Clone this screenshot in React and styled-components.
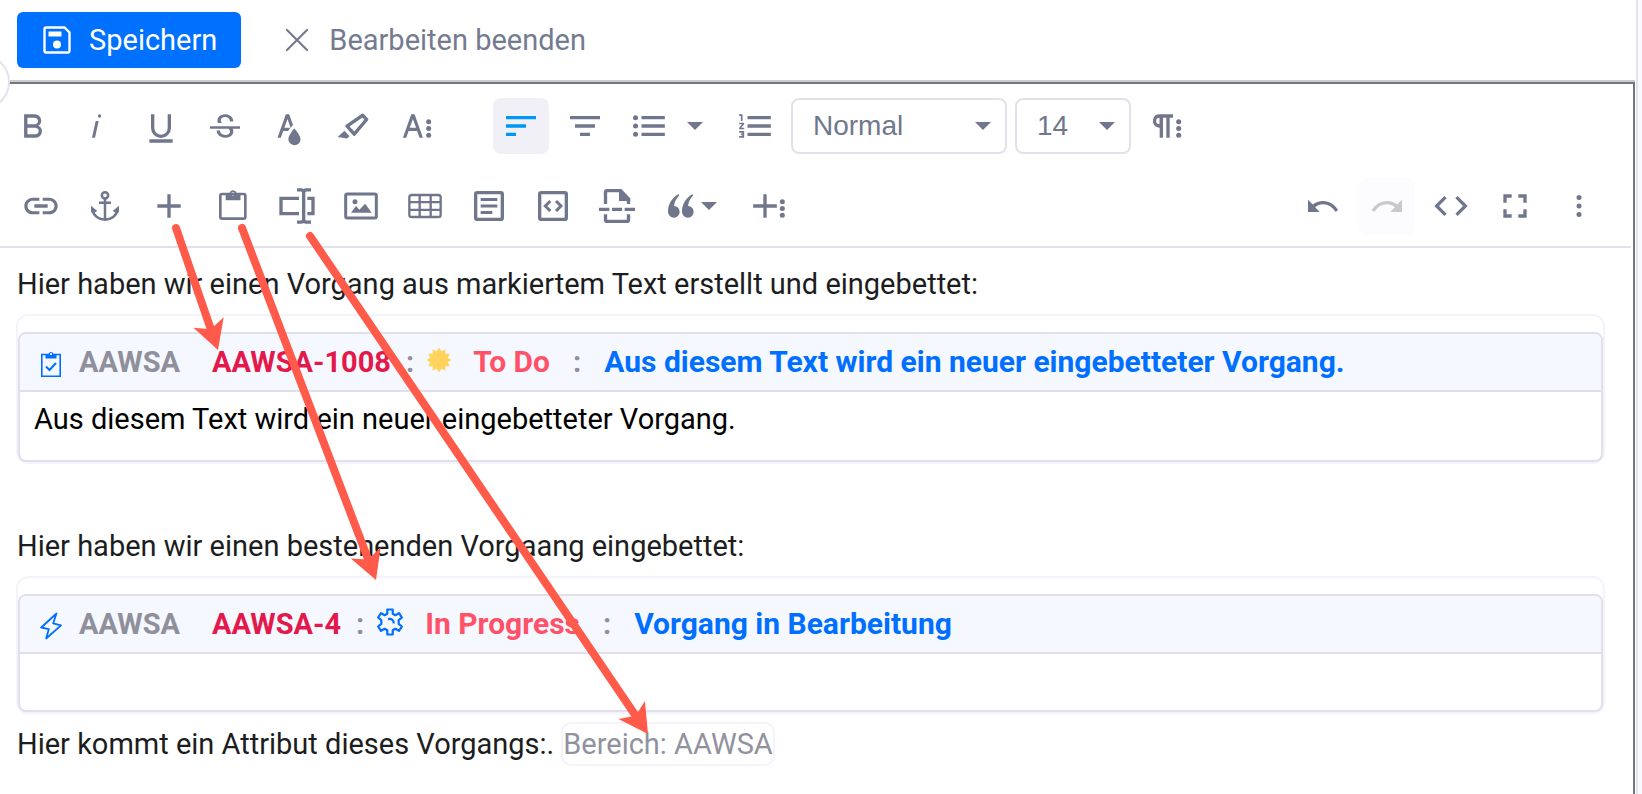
import React, { useState } from "react";
import styled, { createGlobalStyle, css } from "styled-components";

const GlobalStyle = createGlobalStyle`
    * {
        box-sizing: border-box;
    }
    body {
        margin: 0;
        background: #fff;
        font-family: Roboto, "Liberation Sans", sans-serif;
        font-size: 29px;
        color: #1c1d21;
    }
    button, select {
        font: inherit;
        border: 0;
        padding: 0;
        background: none;
        cursor: pointer;
    }
    a {
        text-decoration: none;
    }
    svg {
        display: block;
        flex-shrink: 0;
    }
`

const Page = styled.div`
    position: relative;
    display: flex;
    min-height: 100vh;
    overflow: hidden;
`

const Main = styled.main`
    display: flex;
    flex-direction: column;
    flex: 1;
    min-width: 0;
`

const Gutter = styled.aside`
    width: 6px;
    border-left: 2px solid #e3e3ed;
    background: #fafafc;
`

const Header = styled.header`
    display: flex;
    align-items: center;
    height: 82px;
    padding: 0 17px 2px;
    gap: 44px;
`

const SaveButton = styled.button`
    display: flex;
    align-items: center;
    gap: 18px;
    height: 56px;
    padding: 0 24px 0 26px;
    border-radius: 6px;
    background: #0070ff;
    color: #fff;
`

const CancelButton = styled.button`
    display: flex;
    align-items: center;
    gap: 20px;
    height: 56px;
    color: #757b8f;
`

const CollapseHandle = styled.button`
    position: absolute;
    left: -46px;
    top: 54px;
    width: 56px;
    height: 56px;
    border: 2px solid #e3e2ee;
    border-radius: 50%;
    background: #fff;
`

const Editor = styled.section`
    display: flex;
    flex-direction: column;
    flex: 1;
    margin-right: 1px;
    border-top: 2px solid #727681;
    border-right: 2px solid #727681;
    box-shadow: 0 -2px 0 #cacdce;
`

const Toolbar = styled.div`
    display: flex;
    flex-direction: column;
    gap: 24px;
    margin-right: 2px;
    padding: 14px 24px 12px 5px;
    border-bottom: 2px solid #e1e0ec;
`

const ToolRow = styled.div`
    display: flex;
    justify-content: space-between;
    padding-left: ${({ $indent }) => ($indent ? "8px" : "0")};
`

const ToolSide = styled.div`
    display: flex;
    gap: 48px;
`

const ToolGroup = styled.div`
    display: flex;
    gap: 8px;
`

const ToolButton = styled.button`
    display: flex;
    align-items: center;
    justify-content: center;
    width: 56px;
    height: 56px;
    border-radius: 8px;
    color: #70778c;
    ${({ $active }) => $active && css`
        background: #f2f0f7;
        color: #0098f7;
    `}
    &:disabled {
        background: #fcfcfe;
        color: #c9c9cb;
        cursor: default;
    }
`

const SplitButton = styled.div`
    display: flex;
    padding-right: 6px;
`

const CaretButton = styled(ToolButton)`
    width: 36px;
`

const QuoteButton = styled(ToolButton)`
    justify-content: flex-start;
    width: 80px;
    padding-left: 8px;
`

const SelectBox = styled.div`
    display: flex;
    align-items: center;
    position: relative;
    width: ${({ $small }) => ($small ? "116px" : "216px")};
    height: 56px;
    color: #70778c;
`

const SelectField = styled.select`
    width: 100%;
    height: 100%;
    padding: 0 40px 2px 20px;
    border: 2px solid #e1e0ec;
    border-radius: 8px;
    appearance: none;
    color: inherit;
    font-family: "Liberation Sans", Arial, sans-serif;
    font-size: 28px;
`

const SelectCaret = styled.span`
    position: absolute;
    right: 16px;
    pointer-events: none;
`

const Content = styled.div`
    display: flex;
    flex-direction: column;
    gap: 8px;
    padding: 14px 28px 24px 16px;
`

const Paragraph = styled.p`
    display: flex;
    align-items: center;
    gap: 7px;
    min-height: 44px;
    margin: 0;
    line-height: 44px;
    padding-left: 1px;
`

const Embed = styled.div`
    padding-top: 16px;
    border: 2px solid #f4f3fc;
    border-radius: 12px;
`

const Card = styled.article`
    border: 2px solid #e0e0ea;
    border-radius: 8px;
    overflow: hidden;
`

const CardHead = styled.div`
    display: flex;
    align-items: center;
    height: 58px;
    padding: 0 20px;
    border-bottom: 2px solid #e0e0ea;
    background: #f5f8ff;
    font-weight: 700;
    line-height: 44px;
    color: #8f909c;
`

const TypeIcon = styled.span`
    margin-right: 17px;
    padding-top: 4px;
`

const Project = styled.span`
    margin-right: 32px;
`

const IssueKey = styled.a`
    margin-right: 15px;
    color: #e3194b;
`

const StatusIcon = styled.span`
    margin: 0 21px 0 12px;
    padding-bottom: 4px;
`

const Status = styled.span`
    margin-right: 23px;
    font-size: 30px;
    color: #ff5167;
`

const Summary = styled.a`
    margin-left: 23px;
    font-size: 30px;
    color: #006fff;
`

const CardBody = styled.div`
    min-height: 56px;
    color: #000;
`

const CardText = styled.p`
    margin: 0;
    padding: 5px 14px 19px;
    line-height: 44px;
`

const AttributeChip = styled.span`
    height: 44px;
    line-height: 40px;
    border: 2px solid #f4f3fc;
    border-radius: 10px;
    color: #92929e;
`

const Overlay = styled.svg`
    position: absolute;
    inset: 0;
    width: 100%;
    height: 100%;
    pointer-events: none;
`

const Svg = ({ children, size = 40 }) => (
    <svg width={size} height={size} viewBox="0 0 24 24" fill="currentColor" aria-hidden="true">
        {children}
    </svg>
)

// outlined shapes share the same stroke settings
const Line = ({ d, w = 2 }) => <path d={d} fill="none" stroke="currentColor" strokeWidth={w} />

const Dots = ({ x }) => (
    <>
        <circle cx={x} cy="9.5" r="1.5" />
        <circle cx={x} cy="13.5" r="1.5" />
        <circle cx={x} cy="17.5" r="1.5" />
    </>
)

const Caret = () => (
    <svg width="16" height="8" viewBox="0 0 16 8" fill="currentColor" aria-hidden="true">
        <path d="M0 0h16L8 8z" />
    </svg>
)

const icons = {
    bold: <path d="M15.25,11.8h0A3.68,3.68,0,0,0,17,9a3.93,3.93,0,0,0-3.86-4H6.65V19h7a3.74,3.74,0,0,0,3.7-3.78V15.1A3.64,3.64,0,0,0,15.25,11.8ZM8.65,7h4.2a2.09,2.09,0,0,1,2,1.3,2.09,2.09,0,0,1-1.37,2.61,2.23,2.23,0,0,1-.63.09H8.65Zm4.6,10H8.65V13h4.6a2.09,2.09,0,0,1,2,1.3,2.09,2.09,0,0,1-1.37,2.61A2.23,2.23,0,0,1,13.25,17Z" />,
    italic: <path d="M11.2,9h1.8l-2.2,10H9ZM13.5,5a1,1,0,1,0,1,1,1,1,0,0,0-1-1Z" />,
    underline: <path d="M19,20v2H5V20ZM16,13.2a4,4,0,0,1-8,0V5H6v8.2a6,6,0,0,0,12,0V5H16Z" />,
    strike: <path d="M3,12.2H21v1.5H16.63a3.6,3.6,0,0,1,.35,1.6,3.25,3.25,0,0,1-1.31,2.7A5.55,5.55,0,0,1,12.2,19a6.44,6.44,0,0,1-2.62-.54,4.46,4.46,0,0,1-1.9-1.49,3.67,3.67,0,0,1-.67-2.15V14.7H9.02v.12a2.18,2.18,0,0,0,.85,1.83,3.69,3.69,0,0,0,2.33.68,3.39,3.39,0,0,0,2.08-.55,1.73,1.73,0,0,0,.7-1.46,1.7,1.7,0,0,0-.65-1.44,3,3,0,0,0-.27-.18H3ZM16.34,7.06A4.18,4.18,0,0,0,14.62,5.55,5.63,5.63,0,0,0,12.11,5,5.16,5.16,0,0,0,8.75,6.06,3.36,3.36,0,0,0,7.44,8.77a3.23,3.23,0,0,0,.32,1.43h2.6c-.09-.06-.19-.11-.26-.16a1.6,1.6,0,0,1-.65-1.3,1.8,1.8,0,0,1,.69-1.51,3.13,3.13,0,0,1,1.97-.56,3.05,3.05,0,0,1,2.1.67,2.35,2.35,0,0,1,.74,1.83v.12h2V9.17A3.9,3.9,0,0,0,16.34,7.06Z" />,
    textColor: <path d="M15.2,13.5s-3.6,3.9-3.6,6.3a3.65,3.65,0,0,0,7.3.1v-.1C18.9,17.4,15.2,13.5,15.2,13.5Zm-1.47-1.36.67-.73L12.1,5h-2l-5,14h2l1.43-4h2.94A24.4,24.4,0,0,1,13.73,12.14ZM11.1,7.8l1.86,5.2H9.24Z" />,
    marker: <path d="M9.92,12.24l7.75-5.39,1.18,1.3-6.1,7.2L9.92,12.24M7.59,12.65l4.53,4.98a.93.93,0,0,0,1.4-.09L20.97,8.73A.91.91,0,0,0,20.99,7.53l-2.51-2.76a.91.91,0,0,0-1.2-.09L7.81,11.27A.93.93,0,0,0,7.59,12.65ZM2.79,18.53,8.41,19.5l1.48-1.35-3.03-3.33Z" />,
    moreText: (
        <>
            <path d="M13.55,19h2l-5-14h-2l-5,14h2l1.4-4h5.1Zm-5.9-6,1.9-5.2,1.9,5.2Z" />
            <Dots x="19" />
        </>
    ),
    alignLeft: <path d="M3 6h18v2H3zM3 11h12v2H3zM3 16h6v2H3z" />,
    alignCenter: <path d="M3 6h18v2H3zM6 11h12v2H6zM9 16h6v2H9z" />,
    bullets: (
        <>
            <circle cx="3.9" cy="7" r="1.5" />
            <circle cx="3.9" cy="12" r="1.5" />
            <circle cx="3.9" cy="17" r="1.5" />
            <path d="M7.5 6h14v2h-14zM7.5 11h14v2h-14zM7.5 16h14v2h-14z" />
        </>
    ),
    numbers: <path d="M7.5 6h14v2h-14zM7.5 11h14v2h-14zM7.5 16h14v2h-14zM3.5 9h1V5h-2v1h1zM2.5 11h1.8l-1.8 2.1v.9h3v-1H3.7l1.8-2.1V10h-3zM2.5 16h2v.5h-1v1h1v.5h-2v1h3v-4h-3z" />,
    paragraph: (
        <>
            <path d="M7.7,5a4.1,4.1,0,0,0-4.1,3.2,4,4,0,0,0,3.1,4.7,4,4,0,0,0,.9.1v6h2V7h2V19h2V7h2V5ZM5.5,9a2,2,0,0,1,2-2v4A2,2,0,0,1,5.5,9Z" />
            <Dots x="19" />
        </>
    ),
    link: <path d="M3.9 12c0-1.71 1.39-3.1 3.1-3.1h4V7H7c-2.76 0-5 2.24-5 5s2.24 5 5 5h4v-1.9H7c-1.71 0-3.1-1.39-3.1-3.1zM8 13h8v-2H8v2zm9-6h-4v1.9h4c1.71 0 3.1 1.39 3.1 3.1s-1.39 3.1-3.1 3.1h-4V17h4c2.76 0 5-2.24 5-5s-2.24-5-5-5z" />,
    anchor: (
        <>
            <circle cx="12" cy="5.6" r="1.9" fill="none" stroke="currentColor" strokeWidth="1.5" />
            <Line w="1.5" d="M12 7.5V20M8.4 10.1h7.2M4.6 14.5c.5 3.4 3.6 5.7 7.4 5.7s6.9-2.3 7.4-5.7" />
            <path d="M3.6 11.8v4l1.6.4 2.2-1.2zM20.4 11.8v4l-1.6.4-2.2-1.2z" />
        </>
    ),
    plus: <Line d="M12 5v14M5 12h14" />,
    clipboard: (
        <>
            <rect x="4.4" y="4.8" width="15" height="14.8" rx="1" fill="none" stroke="currentColor" strokeWidth="1.6" />
            <path fillRule="evenodd" d="M7.6 4.2h2.2a2.3 2.3 0 0 1 4.4 0h2.3v4.4H7.6zM12 3.6a1.1 1.1 0 1 0 0 2.2 1.1 1.1 0 0 0 0-2.2z" />
        </>
    ),
    field: (
        <>
            <Line w="2" d="M13.2 7.4H2.4v9.2h10.8M18.2 7.4h3.4v9.2h-3.4" />
            <Line w="2" d="M12 2.3h2.2q1.8 0 1.8 1.6v16.2q0 1.6-1.8 1.6H12M20.4 2.3h-2.6q-1.8 0-1.8 1.6M20.4 21.7h-2.6q-1.8 0-1.8-1.6" />
        </>
    ),
    image: (
        <>
            <rect x="2.8" y="4.8" width="18.4" height="14.4" rx="1" fill="none" stroke="currentColor" strokeWidth="1.8" />
            <circle cx="8.4" cy="9.4" r="1.5" />
            <path d="M6 16l3-4 2 2.2 3.5-3.6L18.4 16z" />
        </>
    ),
    table: (
        <>
            <rect x="2.6" y="5.4" width="18.8" height="13.2" rx="1.4" fill="none" stroke="currentColor" strokeWidth="1.4" />
            <Line w="1.4" d="M8.8 5.4v13.2M15.4 5.4v13.2M2.6 9.7h18.8M2.6 14.3h18.8" />
        </>
    ),
    article: (
        <>
            <rect x="4" y="4" width="16" height="16" rx="1" fill="none" stroke="currentColor" strokeWidth="2" />
            <Line w="1.8" d="M7 8.1h10M7 12h10M7 15.9h7" />
        </>
    ),
    codeBox: (
        <>
            <rect x="4" y="4" width="16" height="16" rx="1" fill="none" stroke="currentColor" strokeWidth="2" />
            <Line w="1.8" d="M10.4 9L7.4 12l3 3M13.8 9l3 3-3 3" />
        </>
    ),
    pageBreak: (
        <>
            <Line d="M5.1 10.8V3.8q0-1 1-1h8M18.9 10.8V8M5.1 17v3.2q0 1 1 1h11.8q1 0 1-1V17M1.2 14h6.2M9 14h6M16.6 14h6.2" />
            <path d="M13.2 1.8h1.4l5.3 5.6V9h-6.7z" />
        </>
    ),
    quote: (
        <>
            <path d="M10.4 5l.6.6C9 7.8 8 9.8 7.9 12a3.5 3.5 0 1 1-3.7 3.8C4 11.5 6.2 7.3 10.4 5z" />
            <path d="M18.8 5l.6.6c-2 2.2-3 4.2-3.1 6.4a3.5 3.5 0 1 1-3.7 3.8c-.2-4.3 2-8.5 6.2-10.8z" />
        </>
    ),
    morePlus: (
        <>
            <Line d="M9.6 5v14M2.5 12h14.2" />
            <Dots x="20" />
        </>
    ),
    undo: <path d="M12 9c-2.3 0-4.5.8-6.1 2.1L3 8.2v7.4h7l-2.7-2.8c1.3-1 2.9-1.8 4.7-1.8 3 0 5.9 1.8 7.4 4.5l1.7-.9C19.4 11.2 15.8 9 12 9z" />,
    redo: <path d="M12 9c2.3 0 4.5.8 6.1 2.1L21 8.2v7.4h-7l2.7-2.8c-1.3-1-2.9-1.8-4.7-1.8-3 0-5.9 1.8-7.4 4.5l-1.7-.9C4.6 11.2 8.2 9 12 9z" />,
    code: <path d="M9.4 16.6L4.8 12l4.6-4.6L8 6l-6 6 6 6 1.4-1.4zm5.2 0l4.6-4.6-4.6-4.6L16 6l6 6-6 6-1.4-1.4z" />,
    fullscreen: <path d="M7 14H5v5h5v-2H7v-3zm-2-4h2V7h3V5H5v5zm12 7h-3v2h5v-5h-2v3zM14 5v2h3v3h2V5h-5z" />,
    more: (
        <>
            <circle cx="12" cy="6.9" r="1.5" />
            <circle cx="12" cy="12" r="1.5" />
            <circle cx="12" cy="17.1" r="1.5" />
        </>
    ),
}

const Tool = ({ icon, label, ...rest }) => (
    <ToolButton type="button" aria-label={label} {...rest}>
        <Svg>{icons[icon]}</Svg>
    </ToolButton>
)

const textTools = [
    ["bold", "Fett"],
    ["italic", "Kursiv"],
    ["underline", "Unterstrichen"],
    ["strike", "Durchgestrichen"],
    ["textColor", "Textfarbe"],
    ["marker", "Hintergrundfarbe"],
    ["moreText", "Mehr Text"],
]

const insertTools = [
    ["link", "Link"],
    ["anchor", "Anker"],
    ["plus", "Vorgang erstellen"],
    ["clipboard", "Vorgang einbetten"],
    ["field", "Attribut einbetten"],
    ["image", "Bild"],
    ["table", "Tabelle"],
    ["article", "Textblock"],
    ["codeBox", "Codeblock"],
    ["pageBreak", "Seitenumbruch"],
]

const SaveIcon = () => (
    <svg width="28" height="28" viewBox="0 0 28 28" fill="none" stroke="#fff" strokeWidth="2.4" aria-hidden="true">
        <path d="M3 1.5h18.5l5 5V25a1.5 1.5 0 0 1-1.5 1.5H3A1.5 1.5 0 0 1 1.5 25V3A1.5 1.5 0 0 1 3 1.5z" />
        <path d="M5.5 5.5h13v5h-13z" fill="#fff" stroke="none" />
        <circle cx="14" cy="18.5" r="4" fill="#fff" stroke="none" />
    </svg>
)

const CloseIcon = () => (
    <svg width="24" height="24" viewBox="0 0 24 24" stroke="currentColor" strokeWidth="2.2" strokeLinecap="round" aria-hidden="true">
        <path d="M2 2l20 20M22 2L2 22" />
    </svg>
)

const TaskIcon = () => (
    <svg width="22" height="28" viewBox="0 0 22 28" fill="none" stroke="#006fff" aria-hidden="true">
        <path d="M1.8 4.5h18.4v21.7H1.8z" strokeWidth="1.6" />
        <path d="M5.5 4h3a2.6 2.6 0 0 1 5 0h3v4.5h-11z" fill="#006fff" stroke="none" />
        <circle cx="11" cy="4" r="1.1" fill="#fff" stroke="none" />
        <path d="M6 16.5l3.5 3.5 6.5-7" strokeWidth="2" />
    </svg>
)

const BoltIcon = () => (
    <svg width="22" height="28" viewBox="0 0 22 28" fill="none" stroke="#006fff" strokeWidth="1.8" strokeLinejoin="round" aria-hidden="true">
        <path d="M16.5 1.5L1.2 15.5l7.6 1.6-2.6 9.4L21 13.3l-7.8-2z" />
    </svg>
)

const SunIcon = () => {
    // twelve-pointed star
    const points = Array.from({ length: 24 }, (_, i) => {
        const r = i % 2 ? 9 : 12.5
        const a = (Math.PI * i) / 12
        return `${13 + r * Math.sin(a)},${13 - r * Math.cos(a)}`
    })
    return (
        <svg width="26" height="26" viewBox="0 0 26 26" fill="#ffd35c" aria-hidden="true">
            <polygon points={points.join(" ")} />
        </svg>
    )
}

const GearIcon = () => (
    <svg width="28" height="28" viewBox="0 0 28 28" fill="none" stroke="#006fff" strokeWidth="2.2" strokeLinejoin="round" aria-hidden="true">
        <path d="M11.3 1.5h5.4v4.2l2.6 1.5 3.7-2 2.9 4.3-3.2 2.6v3.8l3.2 2.6-2.9 4.3-3.7-2-2.6 1.5v4.2h-5.4v-4.2l-2.6-1.5-3.7 2-2.9-4.3 3.2-2.6v-3.8L2.1 9.5 5 5.2l3.7 2 2.6-1.5z" />
        <path d="M12 11.2c3-1.2 6.2.8 5.6 4.3" />
    </svg>
)

const Arrow = ({ from, to }) => {
    const dx = to[0] - from[0]
    const dy = to[1] - from[1]
    const length = Math.hypot(dx, dy)
    const angle = (Math.atan2(dy, dx) * 180) / Math.PI
    return (
        <g transform={`translate(${from[0]} ${from[1]}) rotate(${angle})`} fill="#ff5a4a" stroke="#ff5a4a">
            <path d={`M0 0H${length - 18}`} strokeWidth="8" strokeLinecap="round" />
            <path d={`M${length} 0l-29 16 7-16-7-16z`} stroke="none" />
        </g>
    )
}

const IssueCard = ({ typeIcon, issueKey, statusIcon, status, summary, children }) => (
    <Embed>
        <Card>
            <CardHead>
                <TypeIcon>{typeIcon}</TypeIcon>
                <Project>AAWSA</Project>
                <IssueKey href="#">{issueKey}</IssueKey>
                <span>:</span>
                <StatusIcon>{statusIcon}</StatusIcon>
                <Status>{status}</Status>
                <span>:</span>
                <Summary href="#">{summary}</Summary>
            </CardHead>
            <CardBody>{children}</CardBody>
        </Card>
    </Embed>
)

const App = () => {
    const [align, setAlign] = useState("left")
    const [format, setFormat] = useState("Normal")
    const [size, setSize] = useState("14")

    return (
        <>
            <GlobalStyle />
            <Page>
                <Main>
                    <Header>
                        <SaveButton type="button"><SaveIcon />Speichern</SaveButton>
                        <CancelButton type="button"><CloseIcon />Bearbeiten beenden</CancelButton>
                    </Header>
                    <Editor>
                        <Toolbar role="toolbar">
                            <ToolRow>
                                <ToolSide>
                                    <ToolGroup>
                                        {textTools.map(([icon, label]) => <Tool key={icon} icon={icon} label={label} />)}
                                    </ToolGroup>
                                    <ToolGroup>
                                        <Tool icon="alignLeft" label="Linksbündig" $active={align === "left"} onClick={() => setAlign("left")} />
                                        <Tool icon="alignCenter" label="Zentriert" $active={align === "center"} onClick={() => setAlign("center")} />
                                        <SplitButton>
                                            <Tool icon="bullets" label="Liste" />
                                            <CaretButton type="button" aria-label="Listenart"><Caret /></CaretButton>
                                        </SplitButton>
                                        <Tool icon="numbers" label="Nummerierte Liste" />
                                        <SelectBox>
                                            <SelectField aria-label="Format" value={format} onChange={(e) => setFormat(e.target.value)}>
                                                <option>Normal</option>
                                            </SelectField>
                                            <SelectCaret><Caret /></SelectCaret>
                                        </SelectBox>
                                        <SelectBox $small>
                                            <SelectField aria-label="Schriftgröße" value={size} onChange={(e) => setSize(e.target.value)}>
                                                <option>14</option>
                                            </SelectField>
                                            <SelectCaret><Caret /></SelectCaret>
                                        </SelectBox>
                                        <Tool icon="paragraph" label="Mehr Absatz" />
                                    </ToolGroup>
                                </ToolSide>
                            </ToolRow>
                            <ToolRow $indent>
                                <ToolGroup>
                                    {insertTools.map(([icon, label]) => <Tool key={icon} icon={icon} label={label} />)}
                                    <QuoteButton type="button" aria-label="Zitat">
                                        <Svg>{icons.quote}</Svg>
                                        <Caret />
                                    </QuoteButton>
                                    <Tool icon="morePlus" label="Mehr einfügen" />
                                </ToolGroup>
                                <ToolGroup>
                                    <Tool icon="undo" label="Rückgängig" />
                                    <Tool icon="redo" label="Wiederholen" disabled />
                                    <Tool icon="code" label="Quelltext" />
                                    <Tool icon="fullscreen" label="Vollbild" />
                                    <Tool icon="more" label="Mehr" />
                                </ToolGroup>
                            </ToolRow>
                        </Toolbar>
                        <Content>
                            <Paragraph>Hier haben wir einen Vorgang aus markiertem Text erstellt und eingebettet:</Paragraph>
                            <IssueCard
                                typeIcon={<TaskIcon />}
                                issueKey="AAWSA-1008"
                                statusIcon={<SunIcon />}
                                status="To Do"
                                summary="Aus diesem Text wird ein neuer eingebetteter Vorgang."
                            >
                                <CardText>Aus diesem Text wird ein neuer eingebetteter Vorgang.</CardText>
                            </IssueCard>
                            <Paragraph />
                            <Paragraph>Hier haben wir einen bestehenden Vorgaang eingebettet:</Paragraph>
                            <IssueCard
                                typeIcon={<BoltIcon />}
                                issueKey="AAWSA-4"
                                statusIcon={<GearIcon />}
                                status="In Progress"
                                summary="Vorgang in Bearbeitung"
                            />
                            <Paragraph>
                                Hier kommt ein Attribut dieses Vorgangs:.
                                <AttributeChip>Bereich: AAWSA</AttributeChip>
                            </Paragraph>
                        </Content>
                    </Editor>
                </Main>
                <Gutter />
                <CollapseHandle type="button" aria-label="Seitenleiste" />
                <Overlay aria-hidden="true">
                    <Arrow from={[176, 228]} to={[218, 350]} />
                    <Arrow from={[242, 228]} to={[376, 580]} />
                    <Arrow from={[310, 236]} to={[648, 734]} />
                </Overlay>
            </Page>
        </>
    )
}

export default App
